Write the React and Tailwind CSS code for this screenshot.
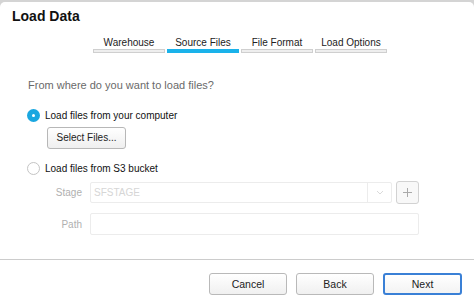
import React from "react";

const steps = ["Warehouse", "Source Files", "File Format", "Load Options"];

const Radio = ({ checked }) =>
  checked ? (
    <span className="w-[13px] h-[13px] rounded-full bg-[#1aa7e0] flex items-center justify-center shrink-0">
      <span className="w-[3px] h-[3px] rounded-full bg-white" />
    </span>
  ) : (
    <span className="w-[13px] h-[13px] rounded-full border border-[#c4c4c4] bg-white shrink-0" />
  );

const Button = ({ children, primary }) => (
  <button
    className={
      primary
        ? "block w-[79px] h-[22px] rounded-[3px] border-2 border-[#3a80d6] bg-gradient-to-b from-white to-[#f3f3f3] text-[10.5px] text-[#222] leading-none"
        : "block w-[78px] h-[22px] rounded-[3px] border border-[#b9b9b9] bg-gradient-to-b from-white to-[#f0f0f0] text-[10.5px] text-[#222] leading-none"
    }
  >
    {children}
  </button>
);

export default function App() {
  return (
    <div className="w-[474px] h-[305px] bg-[#d4d4d4] pt-[2px] overflow-hidden font-['Liberation_Sans',Arial,sans-serif]">
      <div className="bg-white h-full rounded-t-[5px] flex flex-col">
        <h2 className="pl-[12px] pt-[6px] text-[14px] leading-[16px] font-bold text-[#111]">
          Load Data
        </h2>

        {/* wizard steps */}
        <div className="flex gap-[2px] ml-[93px] mt-[13px]">
          {steps.map((s, i) => (
            <div key={s} className="w-[72px] flex flex-col items-center">
              <span className="text-[10px] leading-[12px] text-[#222] whitespace-nowrap">{s}</span>
              <span
                className={
                  i === 1
                    ? "w-full h-[4px] bg-[#1ab2ea]"
                    : "w-full h-[4px] border border-[#cfcfcf] bg-[#eeeeee]"
                }
              />
            </div>
          ))}
        </div>

        <p className="ml-[28px] mt-[26px] text-[11px] leading-[13px] text-[#6a6a6a]">
          From where do you want to load files?
        </p>

        <label className="flex items-center gap-[5px] ml-[27px] mt-[17px] text-[10px] leading-[13px] text-[#111]">
          <Radio checked />
          Load files from your computer
        </label>
        <button className="block ml-[47px] mt-[5px] w-[79px] h-[22px] rounded-[3px] border border-[#b7b7b7] bg-gradient-to-b from-white to-[#efefef] text-[10px] text-[#222] leading-none">
          Select Files...
        </button>

        <label className="flex items-center gap-[5px] ml-[27px] mt-[13px] text-[10px] leading-[13px] text-[#111]">
          <Radio />
          Load files from S3 bucket
        </label>

        <div className="flex items-center mt-[6px] h-[23px]">
          <span className="w-[82px] text-right text-[10px] text-[#b0b0b0]">Stage</span>
          <div className="ml-[8px] w-[302px] h-[21px] border border-[#ececec] rounded-[2px] flex items-center">
            <span className="flex-1 pl-[3px] text-[10px] text-[#d6d6d6]">SFSTAGE</span>
            <span className="w-[24px] h-full border-l border-[#ececec] flex items-center justify-center">
              <svg width="8" height="5" viewBox="0 0 8 5" fill="none">
                <path d="M1 1l3 3 3-3" stroke="#dadada" strokeWidth="1" />
              </svg>
            </span>
          </div>
          <span className="ml-[4px] w-[23px] h-[23px] border border-[#d2d2d2] rounded-[3px] bg-[#f8f8f8] flex items-center justify-center">
            <svg width="9" height="9" viewBox="0 0 9 9">
              <path d="M4.5 0v9M0 4.5h9" stroke="#a9a9a9" strokeWidth="1" />
            </svg>
          </span>
        </div>

        <div className="flex items-center mt-[9px]">
          <span className="w-[82px] text-right text-[10px] text-[#b0b0b0]">Path</span>
          <div className="ml-[8px] w-[329px] h-[22px] border border-[#ececec] rounded-[2px]" />
        </div>

        <div className="mt-[24px] h-px bg-[#cccccc]" />

        <div className="flex justify-end gap-[9px] pr-[12px] mt-[13px]">
          <Button>Cancel</Button>
          <Button>Back</Button>
          <Button primary>Next</Button>
        </div>
      </div>
    </div>
  );
}
